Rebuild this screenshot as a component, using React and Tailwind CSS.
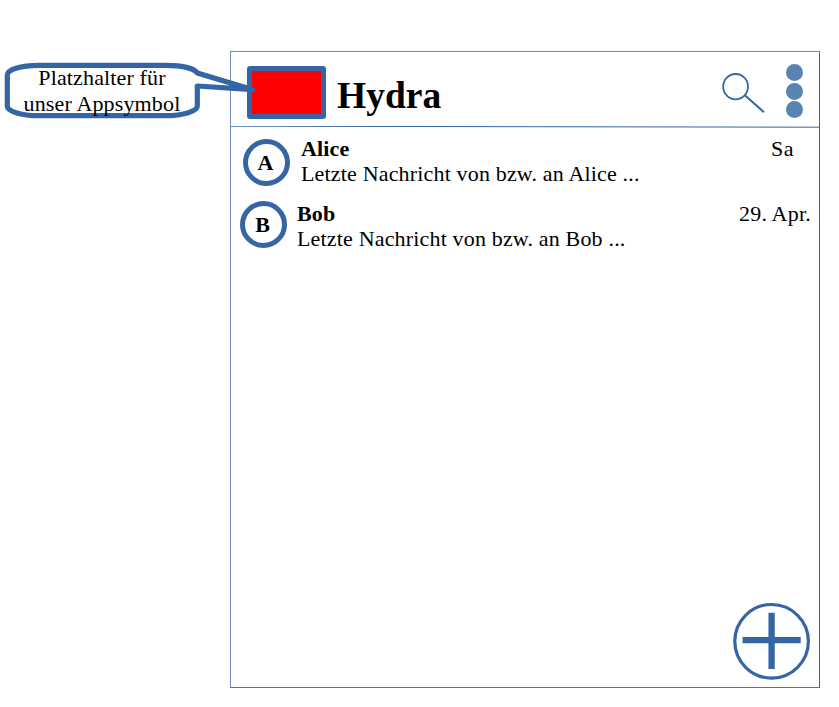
const serif = "font-['Liberation_Serif','Times_New_Roman',serif]";

const chats = [
  {
    initial: 'A',
    name: 'Alice',
    message: 'Letzte Nachricht von bzw. an Alice ...',
    date: 'Sa',
    row: 'pl-[12px] pr-[25px] h-[65px]',
    avatar: 'mt-[3px]',
    gap: 'ml-[11px]',
    dateText: 'tracking-[0.5px]',
  },
  {
    initial: 'B',
    name: 'Bob',
    message: 'Letzte Nachricht von bzw. an Bob ...',
    date: '29. Apr.',
    row: 'pl-[9px] pr-[8px] h-[65px]',
    avatar: 'mt-0',
    gap: 'ml-[10px]',
    dateText: 'tracking-[0.22px]',
  },
];

function SearchIcon() {
  return (
    <svg className="mt-[20px] h-[42px] w-[44px]" viewBox="0 0 44 42" fill="none" stroke="#3465a4">
      <ellipse cx="14.6" cy="14.7" rx="12.4" ry="12.7" strokeWidth="1.8" />
      <path d="M23.8 23.3 L43 40.2" strokeWidth="2" />
    </svg>
  );
}

function MenuDots() {
  return (
    <div className="ml-[21px] mt-[12px] flex flex-col gap-[1.6px]">
      <div className="size-[17px] rounded-full bg-[#5983b0]" />
      <div className="size-[17px] rounded-full bg-[#5983b0]" />
      <div className="size-[17px] rounded-full bg-[#5983b0]" />
    </div>
  );
}

function ChatRow({ chat }) {
  return (
    <li className={`flex items-start ${chat.row}`}>
      <div className={`flex size-[47px] shrink-0 items-center justify-center rounded-full border-[5.5px] border-[#3465a4] pr-[2px] text-[22px] font-bold leading-none ${chat.avatar}`}>
        {chat.initial}
      </div>
      <div className={`grow whitespace-nowrap text-[22px] leading-[25px] ${chat.gap}`}>
        <div className="font-bold tracking-[0.15px]">{chat.name}</div>
        <div className="tracking-[0.17px]">{chat.message}</div>
      </div>
      <div className={`whitespace-nowrap text-[22px] leading-[25px] ${chat.dateText}`}>{chat.date}</div>
    </li>
  );
}

function Callout() {
  return (
    <div className="absolute left-0 top-[58px] h-[64px] w-[260px]">
      <svg className="absolute inset-0" width="260" height="64" viewBox="0 0 260 64">
        <path
          d="M39 7.300 C20 7.300 7.300 12 7.300 17 V48 C7.300 53 20 57.700 39 57.700 H165 C184 57.700 197.300 53 197.300 48 V28 L253 31.700 L197.300 15 C195 11 184 7.300 165 7.300 Z"
          fill="#fff"
          stroke="#3465a4"
          strokeWidth="5.200"
          strokeLinejoin="round"
        />
      </svg>
      <div className="relative ml-[7px] mt-[7px] w-[190px] text-center text-[22px] leading-[26px] tracking-[0.15px]">
        <div>Platzhalter für</div>
        <div>unser Appsymbol</div>
      </div>
    </div>
  );
}

export default function App() {
  return (
    <div className={`relative h-[707px] w-[839px] overflow-hidden bg-white pl-[230px] pt-[51px] text-black ${serif}`}>
      <main className="flex h-[637px] w-[590px] flex-col border border-[#6d90c0] border-r-[#3465a4] border-b-[#4a75ae]">
        <header className="flex h-[74px] shrink-0 items-start">
          <div className="ml-[16px] mt-[14px] h-[53px] w-[79px] rounded-[3px] border-[5.5px] border-[#3465a4] bg-[#ff0000]" />
          <h1 className="ml-[11px] mt-[22px] text-[37.5px] font-bold leading-[44px]">Hydra</h1>
          <div className="ml-auto flex pr-[16px]">
            <SearchIcon />
            <MenuDots />
          </div>
        </header>
        <svg className="h-[2px] w-full shrink-0" viewBox="0 0 588 2" preserveAspectRatio="none">
          <path d="M0 0.200 L588 1.200" stroke="#3465a4" strokeWidth="1" />
        </svg>
        <ul className="pt-[8px]">
          {chats.map((chat) => (
            <ChatRow key={chat.name} chat={chat} />
          ))}
        </ul>
        <div className="mb-[7px] ml-auto mr-[8px] mt-auto">
          <svg width="78" height="78" viewBox="0 0 78 78" fill="none" stroke="#3465a4">
            <circle cx="38.600" cy="39.300" r="36.800" strokeWidth="3.200" />
            <path d="M9.500 38.200 H67.700 M38.600 10.800 V67" strokeWidth="6.300" />
          </svg>
        </div>
      </main>
      <Callout />
    </div>
  );
}
